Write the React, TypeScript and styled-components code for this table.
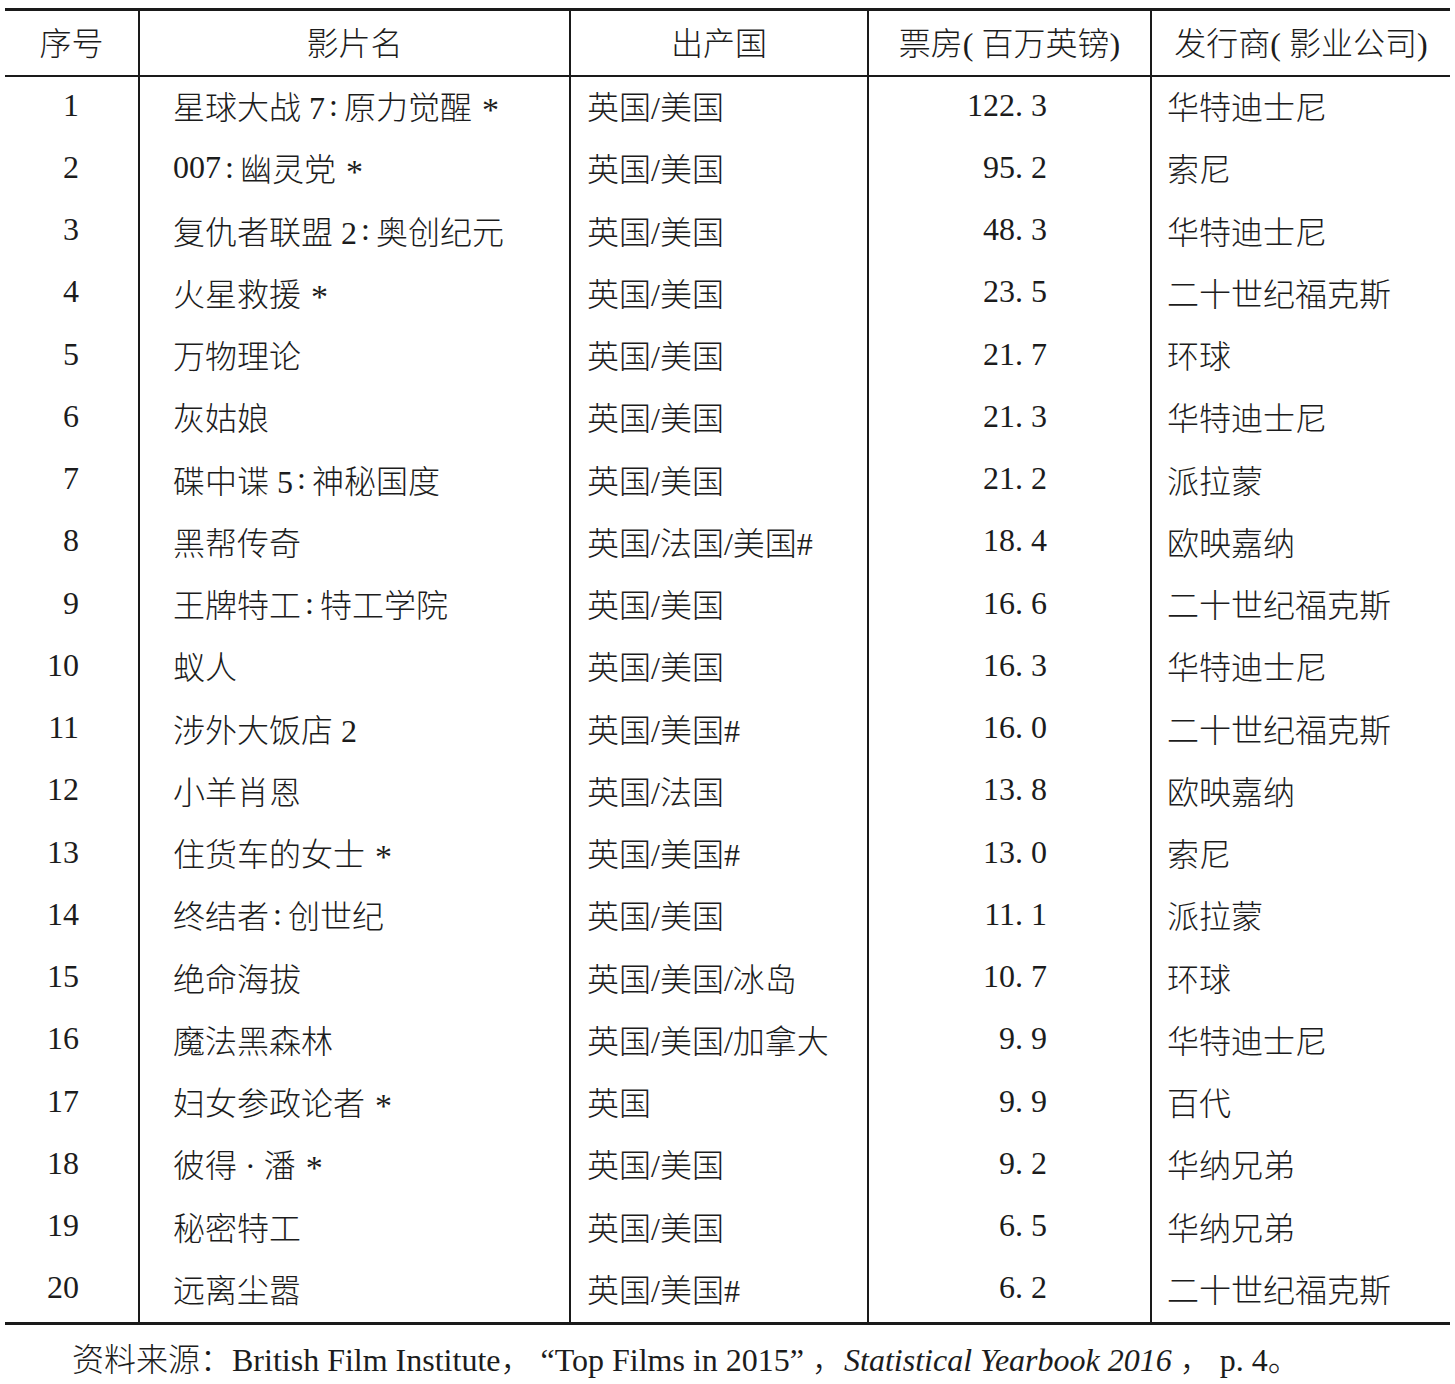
import styled, { createGlobalStyle } from "styled-components";

const GlobalStyle = createGlobalStyle`
    html, body {
        margin: 0;
        padding: 0;
        background: #ffffff;
    }
    body {
        font-family: "Liberation Serif", "Noto Sans CJK SC", serif;
        font-weight: 300;
        color: #1c1c1c;
    }
`;

const Page = styled.div`
    padding: 8px 5px 0 5px;
    width: 1445px;
`;

const Grid = styled.div`
    display: grid;
    grid-template-columns: 133px 431px 298px 283px 300px;
    border-top: 3px solid #1a1a1a;
    border-bottom: 3px solid #1a1a1a;
`;

const HeadCell = styled.div<{ $first?: boolean }>`
    height: 62px;
    padding-bottom: 5px;
    box-sizing: content-box;
    height: 59px;
    display: flex;
    align-items: center;
    justify-content: center;
    font-size: 32px;
    border-bottom: 2px solid #1a1a1a;
    border-left: ${(p) => (p.$first ? "none" : "2px solid #1a1a1a")};
    white-space: nowrap;
`;

const Cell = styled.div<{ $align: "left" | "right"; $pad: number; $first?: boolean }>`
    height: 62.25px;
    display: flex;
    align-items: center;
    justify-content: ${(p) => (p.$align === "right" ? "flex-end" : "flex-start")};
    padding: ${(p) => (p.$align === "right" ? `0 ${p.$pad}px 6px 0` : `0 0 6px ${p.$pad}px`)};
    font-size: 32px;
    border-left: ${(p) => (p.$first ? "none" : "2px solid #1a1a1a")};
    white-space: nowrap;
    box-sizing: border-box;
`;

const Star = styled.span`
    margin-left: 10px;
    font-size: 34px;
    position: relative;
    top: 5px;
`;

const Colon = styled.span`
    margin: 0 6px 0 4px;
`;

const Source = styled.p`
    margin: 15px 0 0 67px;
    font-size: 32px;
    line-height: 40px;
    white-space: nowrap;
`;

const Em = styled.i`
    font-style: italic;
`;

type Film = { n: number; title: string; star?: boolean; country: string; gross: string; dist: string };

const films: Film[] = [
    { n: 1, title: "星球大战 7:原力觉醒", star: true, country: "英国/美国", gross: "122. 3", dist: "华特迪士尼" },
    { n: 2, title: "007:幽灵党", star: true, country: "英国/美国", gross: "95. 2", dist: "索尼" },
    { n: 3, title: "复仇者联盟 2:奥创纪元", country: "英国/美国", gross: "48. 3", dist: "华特迪士尼" },
    { n: 4, title: "火星救援", star: true, country: "英国/美国", gross: "23. 5", dist: "二十世纪福克斯" },
    { n: 5, title: "万物理论", country: "英国/美国", gross: "21. 7", dist: "环球" },
    { n: 6, title: "灰姑娘", country: "英国/美国", gross: "21. 3", dist: "华特迪士尼" },
    { n: 7, title: "碟中谍 5:神秘国度", country: "英国/美国", gross: "21. 2", dist: "派拉蒙" },
    { n: 8, title: "黑帮传奇", country: "英国/法国/美国#", gross: "18. 4", dist: "欧映嘉纳" },
    { n: 9, title: "王牌特工:特工学院", country: "英国/美国", gross: "16. 6", dist: "二十世纪福克斯" },
    { n: 10, title: "蚁人", country: "英国/美国", gross: "16. 3", dist: "华特迪士尼" },
    { n: 11, title: "涉外大饭店 2", country: "英国/美国#", gross: "16. 0", dist: "二十世纪福克斯" },
    { n: 12, title: "小羊肖恩", country: "英国/法国", gross: "13. 8", dist: "欧映嘉纳" },
    { n: 13, title: "住货车的女士", star: true, country: "英国/美国#", gross: "13. 0", dist: "索尼" },
    { n: 14, title: "终结者:创世纪", country: "英国/美国", gross: "11. 1", dist: "派拉蒙" },
    { n: 15, title: "绝命海拔", country: "英国/美国/冰岛", gross: "10. 7", dist: "环球" },
    { n: 16, title: "魔法黑森林", country: "英国/美国/加拿大", gross: "9. 9", dist: "华特迪士尼" },
    { n: 17, title: "妇女参政论者", star: true, country: "英国", gross: "9. 9", dist: "百代" },
    { n: 18, title: "彼得 · 潘", star: true, country: "英国/美国", gross: "9. 2", dist: "华纳兄弟" },
    { n: 19, title: "秘密特工", country: "英国/美国", gross: "6. 5", dist: "华纳兄弟" },
    { n: 20, title: "远离尘嚣", country: "英国/美国#", gross: "6. 2", dist: "二十世纪福克斯" },
];

function Title({ text }: { text: string }) {
    const [before, after] = text.split(":");
    if (after === undefined) return <>{text}</>;
    return (
        <>
            {before}
            <Colon>:</Colon>
            {after}
        </>
    );
}

export default function App() {
    return (
        <Page>
            <GlobalStyle />
            <Grid>
                <HeadCell $first>序号</HeadCell>
                <HeadCell>影片名</HeadCell>
                <HeadCell>出产国</HeadCell>
                <HeadCell>票房( 百万英镑)</HeadCell>
                <HeadCell>发行商( 影业公司)</HeadCell>
                {films.map((f) => [
                    <Cell key={`n${f.n}`} $first $align="right" $pad={59}>{f.n}</Cell>,
                    <Cell key={`t${f.n}`} $align="left" $pad={33}>
                        <Title text={f.title} />
                        {f.star && <Star>*</Star>}
                    </Cell>,
                    <Cell key={`c${f.n}`} $align="left" $pad={16}>{f.country}</Cell>,
                    <Cell key={`g${f.n}`} $align="right" $pad={103}>{f.gross}</Cell>,
                    <Cell key={`d${f.n}`} $align="left" $pad={15}>{f.dist}</Cell>,
                ])}
            </Grid>
            <Source>
                资料来源：British Film Institute， “Top Films in 2015” ，<Em>Statistical Yearbook 2016</Em> ， p. 4。
            </Source>
        </Page>
    );
}
